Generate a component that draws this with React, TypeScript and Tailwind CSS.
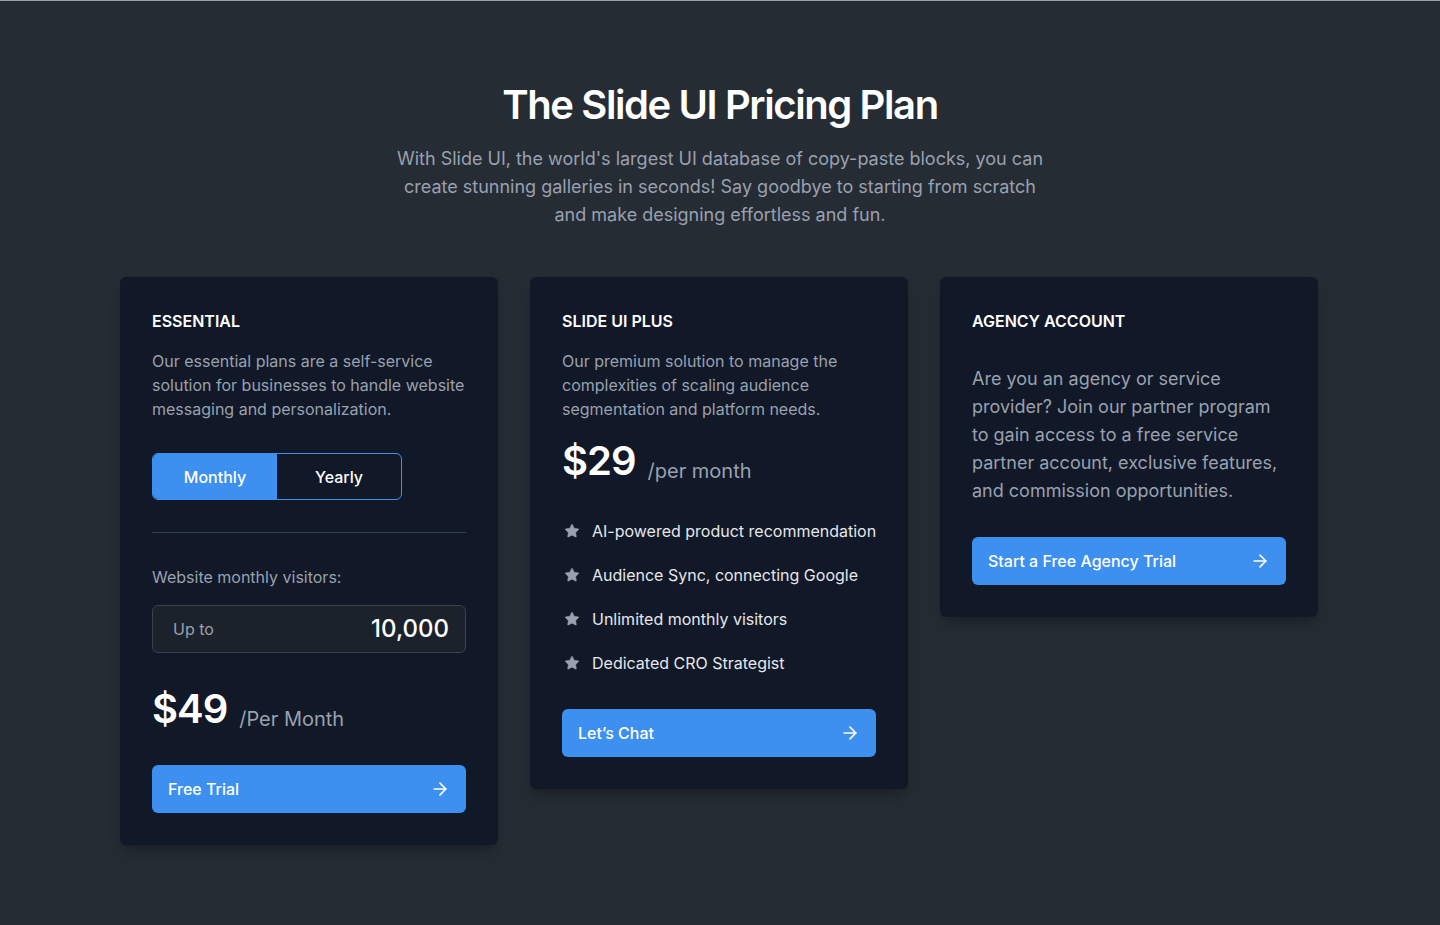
import React from 'react'
import { ArrowRight, Star } from 'lucide-react'

const features = [
  'AI-powered product recommendation',
  'Audience Sync, connecting Google',
  'Unlimited monthly visitors',
  'Dedicated CRO Strategist',
]

function CtaButton({ label }: { label: string }) {
  return (
    <button
      type="button"
      className="flex h-12 w-full items-center justify-between rounded-md bg-[#3d8ff0] px-4 text-base font-medium text-white"
    >
      <span>{label}</span>
      <ArrowRight className="h-5 w-5" strokeWidth={2} />
    </button>
  )
}

function Card({ children }: { children: React.ReactNode }) {
  return (
    <div className="rounded-md bg-[#111827] p-8 shadow-lg shadow-black/20">
      {children}
    </div>
  )
}

export default function App() {
  const [period, setPeriod] = React.useState<'monthly' | 'yearly'>('monthly')

  return (
    <div
      className="min-h-[925px] border-t border-[#9aa1aa] bg-[#252c34] pt-20 pb-20"
      style={{ fontFamily: 'Inter, "Noto Sans", sans-serif' }}
    >
      <div className="mx-auto flex max-w-[650px] flex-col items-center text-center">
        <h1 className="text-[40px] leading-[48px] font-semibold tracking-[-0.035em] text-white">
          The Slide UI Pricing Plan
        </h1>
        <p className="mt-4 text-lg leading-7 text-gray-400">
          With Slide UI, the world's largest UI database of copy-paste blocks, you can create
          stunning galleries in seconds! Say goodbye to starting from scratch and make designing
          effortless and fun.
        </p>
      </div>

      <div className="mx-auto mt-12 grid w-[1200px] grid-cols-[378px_378px_378px] items-start gap-8">
        {/* essential */}
        <Card>
          <h3 className="text-base leading-6 font-semibold text-white">ESSENTIAL</h3>
          <p className="mt-4 text-base leading-6 text-gray-400">
            Our essential plans are a self-service solution for businesses to handle website
            messaging and personalization.
          </p>
          <div className="mt-8 flex h-[47px] w-[250px] overflow-hidden rounded-md border border-[#3d8ff0]">
            <button
              type="button"
              onClick={() => setPeriod('monthly')}
              className={`flex-1 text-base font-medium ${
                period === 'monthly' ? 'bg-[#3d8ff0] text-white' : 'text-white'
              }`}
            >
              Monthly
            </button>
            <button
              type="button"
              onClick={() => setPeriod('yearly')}
              className={`flex-1 text-base font-medium ${
                period === 'yearly' ? 'bg-[#3d8ff0] text-white' : 'text-white'
              }`}
            >
              Yearly
            </button>
          </div>
          <div className="mt-8 h-px bg-gray-700" />
          <p className="mt-8 text-base leading-6 text-gray-400">Website monthly visitors:</p>
          <div className="mt-4 flex h-12 items-center justify-between rounded-md border border-[#3b424d] bg-[#1c222b] pr-4 pl-5">
            <span className="text-base text-gray-400">Up to</span>
            <span className="text-2xl font-medium text-white">10,000</span>
          </div>
          <div className="mt-8 flex items-end gap-3">
            <span className="text-[40px] leading-[48px] font-semibold tracking-tight text-white">$49</span>
            <span className="text-xl text-gray-400">/Per Month</span>
          </div>
          <div className="mt-8">
            <CtaButton label="Free Trial" />
          </div>
        </Card>

        {/* plus */}
        <Card>
          <h3 className="text-base leading-6 font-semibold text-white">SLIDE UI PLUS</h3>
          <p className="mt-4 text-base leading-6 text-gray-400">
            Our premium solution to manage the complexities of scaling audience segmentation and
            platform needs.
          </p>
          <div className="mt-4 flex items-end gap-3">
            <span className="text-[40px] leading-[48px] font-semibold tracking-tight text-white">$29</span>
            <span className="text-xl text-gray-400">/per month</span>
          </div>
          <ul className="mt-[34px] flex flex-col gap-5">
            {features.map((f) => (
              <li
                key={f}
                className="flex items-center gap-3 text-base leading-6 whitespace-nowrap text-gray-200"
              >
                <Star className="ml-[2px] h-4 w-4 shrink-0 fill-gray-400 text-gray-400" strokeWidth={1} />
                <span>{f}</span>
              </li>
            ))}
          </ul>
          <div className="mt-[34px]">
            <CtaButton label="Let’s Chat" />
          </div>
        </Card>

        {/* agency */}
        <Card>
          <h3 className="text-base leading-6 font-semibold text-white">AGENCY ACCOUNT</h3>
          <p className="mt-8 text-lg leading-7 text-gray-400">
            Are you an agency or service provider? Join our partner program to gain access to a
            free service partner account, exclusive features, and commission opportunities.
          </p>
          <div className="mt-8">
            <CtaButton label="Start a Free Agency Trial" />
          </div>
        </Card>
      </div>
    </div>
  )
}
